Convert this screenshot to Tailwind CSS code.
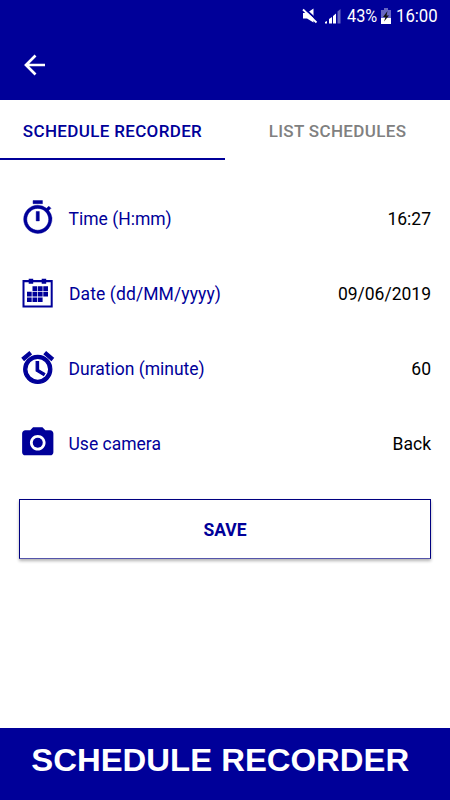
<!DOCTYPE html>
<html lang="en">
<head>
<meta charset="utf-8">
<title>Schedule Recorder</title>
<script src="https://cdn.jsdelivr.net/npm/@tailwindcss/browser@4"></script>
</head>
<body class="bg-white">
<div class="flex h-[800px] w-[450px] flex-col overflow-hidden bg-white font-[Roboto,sans-serif]">
  <header class="h-[100px] shrink-0 bg-[#000099] text-white">
    <div class="flex h-8 items-center justify-end pr-3">
      <svg class="mr-[7px] h-4 w-4" viewBox="0 0 16 16" fill="#fff"><path d="M1 5h4L11.500 .5v14L5 10.500H1z"/><path d="M2.500 .5L16 13" stroke="#000099" stroke-width="2"/><path d="M1 1.500L14.500 14.500" stroke="#fff" stroke-width="1.800"/></svg>
      <svg class="mr-[6px] h-4 w-4" viewBox="0 0 16 16"><path d="M0 15.500V14l2-1v2.500zM4 11l3-2v6.500H4zM8 8l3-2.500v10H8z" fill="#fff"/><path d="M12.500 3.500L15.500 1v14.500h-3z" fill="#fff" opacity=".4"/></svg>
      <span class="w-[31px] whitespace-nowrap text-[18.500px] leading-8"><span class="inline-block origin-left scale-x-[.88]">43%</span></span>
      <svg class="ml-[3px] mr-[5px] h-4 w-[10px]" viewBox="0 0 10 16"><path d="M0 2h3V0h4v2h3v8H0z" fill="#6666c2"/><path d="M0 10h10v6H0z" fill="#fff"/><path d="M6.500 3L2 9h2.500L3 13.500 8 7.500H5.500z" fill="#111"/></svg>
      <span class="w-[42px] whitespace-nowrap text-[19px] leading-8"><span class="inline-block origin-left scale-x-[.88]">16:00</span></span>
    </div>
    <div class="flex h-[66px] items-center pl-[19px]">
      <svg class="h-[30px] w-[32px]" viewBox="0 0 32 30" fill="none" stroke="#fff" stroke-width="2.700"><path d="M26 15H8M16.500 5.500L7 15l9.500 9.500"/></svg>
    </div>
  </header>
  <nav class="flex h-[60px] shrink-0 text-[17px] font-medium leading-[62px] tracking-[.34px]">
    <div class="flex w-[225px] justify-center border-b-[2.500px] border-[#000099] text-[#000099]"><span>SCHEDULE RECORDER</span></div>
    <div class="flex w-[225px] justify-center text-[#808080]"><span>LIST SCHEDULES</span></div>
  </nav>
  <main class="flex flex-1 flex-col px-[19px] pt-5 text-[17.500px] text-[#000099]">
    <div class="flex h-[75px] items-center">
      <svg class="mr-[12px] h-[37.500px] w-[37.500px]" viewBox="0 0 24 24" fill="currentColor"><path d="M15 1H9v2h6V1zm-4 13h2V8h-2v6zm8.030-6.610l1.420-1.420c-.43-.51-.9-.99-1.410-1.410l-1.420 1.420A8.962 8.962 0 0 0 12 4c-4.970 0-9 4.030-9 9s4.020 9 9 9a8.994 8.994 0 0 0 7.030-14.610zM12 20c-3.870 0-7-3.130-7-7s3.130-7 7-7 7 3.130 7 7-3.130 7-7 7z" stroke="currentColor" stroke-width=".3"/></svg>
      <span class="pt-[3px]">Time (H:mm)</span><span class="ml-auto pt-[3px] text-black">16:27</span>
    </div>
    <div class="flex h-[75px] items-center">
      <svg class="mr-[12px] h-[38px] w-[38px]" viewBox="0 0 38 38" fill="currentColor"><path fill-rule="evenodd" d="M3.500 6H33.700v27.500H3.500zM5.500 8.300v23.200h26.200V8.300z"/><path d="M9.700 4.700h4.500v5H9.700zM22.700 4.700h4.500v5h-4.500z"/><path d="M13.500 12.200h4.700v4.700h-4.700zM18.900 12.200h4.700v4.700h-4.700zM24.300 12.200H29v4.700h-4.700zM8 17.800h4.700v4.700H8zM13.500 17.800h4.700v4.700h-4.700zM18.900 17.800h4.700v4.700h-4.700zM24.300 17.800H29v4.700h-4.700zM8 23.400h4.700v4.700H8zM13.500 23.400h4.700v4.700h-4.700zM18.900 23.400h4.700v4.700h-4.700z"/></svg>
      <span class="pt-[3px] tracking-[.1px]">Date (dd/MM/yyyy)</span><span class="ml-auto pt-[3px] text-black">09/06/2019</span>
    </div>
    <div class="flex h-[75px] items-center">
      <svg class="mr-[12px] h-[37.500px] w-[37.500px]" viewBox="0 0 24 24" fill="currentColor"><path d="M22 5.720l-4.600-3.860-1.290 1.530 4.600 3.860L22 5.720zM7.880 3.390L6.600 1.860 2 5.710l1.290 1.530 4.590-3.850zM12.500 8H11v6l4.750 2.850.75-1.230-4-2.370V8zM12 4c-4.970 0-9 4.030-9 9s4.020 9 9 9a9 9 0 0 0 0-18zm0 16c-3.870 0-7-3.130-7-7s3.130-7 7-7 7 3.130 7 7-3.130 7-7 7z" stroke="currentColor" stroke-width=".8"/></svg>
      <span class="pt-[3px]">Duration (minute)</span><span class="ml-auto pt-[3px] text-black">60</span>
    </div>
    <div class="flex h-[75px] items-center">
      <svg class="mr-[12px] h-[37.500px] w-[37.500px]" viewBox="0 0 24 24" fill="currentColor"><circle cx="12" cy="12" r="3.200"/><path d="M9 2L7.170 4H4c-1.100 0-2 .9-2 2v12c0 1.100.9 2 2 2h16c1.100 0 2-.9 2-2V6c0-1.100-.9-2-2-2h-3.170L15 2H9zm3 15c-2.760 0-5-2.240-5-5s2.240-5 5-5 5 2.240 5 5-2.240 5-5 5z"/></svg>
      <span class="pt-[3px]">Use camera</span><span class="ml-auto pt-[3px] text-black">Back</span>
    </div>
    <button class="mt-[19px] h-[60px] w-[412px] border border-[#000080] border-b-[#5555aa] bg-white pt-[2px] text-[17.500px] font-bold shadow-[0_2px_3px_rgba(0,0,0,0.3)]">SAVE</button>
  </main>
  <footer class="flex h-[72px] shrink-0 items-center justify-center bg-[#000099] pr-[9px] pb-[5px] font-['Liberation_Sans',Arial,sans-serif] text-[31px] font-bold text-white">
    <span class="scale-x-[1.06] whitespace-nowrap">SCHEDULE RECORDER</span>
  </footer>
</div>
</body>
</html>
